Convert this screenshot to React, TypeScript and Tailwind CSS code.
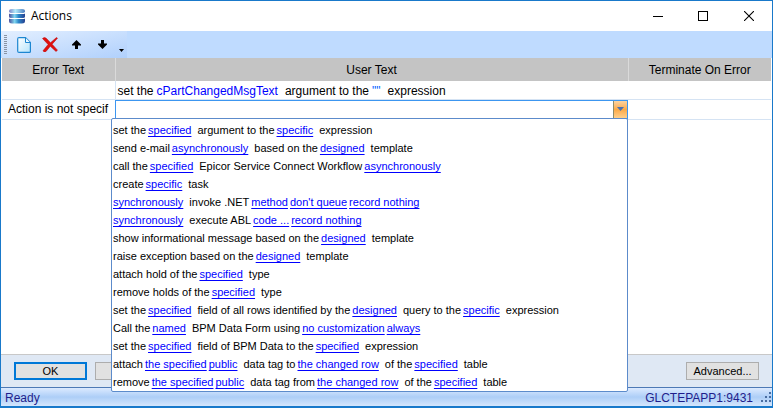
import type { ReactNode } from "react";

// Phrases in [brackets] are the editable parts of an action.
const ACTIONS = [
  "set the [specified] argument to the [specific] expression",
  "send e-mail [asynchronously] based on the [designed] template",
  "call the [specified] Epicor Service Connect Workflow [asynchronously]",
  "create [specific] task",
  "[synchronously] invoke .NET [method] [don't queue] [record nothing]",
  "[synchronously] execute ABL [code ...] [record nothing]",
  "show informational message based on the [designed] template",
  "raise exception based on the [designed] template",
  "attach hold of the [specified] type",
  "remove holds of the [specified] type",
  "set the [specified] field of all rows identified by the [designed] query to the [specific] expression",
  "Call the [named] BPM Data Form using [no customization] [always]",
  "set the [specified] field of BPM Data to the [specified] expression",
  "attach [the specified] [public] data tag to [the changed row] of the [specified] table",
  "remove [the specified] [public] data tag from [the changed row] of the [specified] table",
];

function ActionPhrase({ text }: { text: string }) {
  const parts = text
    .split(/(\[[^\]]+\])/)
    .map((part) => part.trim())
    .filter(Boolean);

  return (
    <>
      {parts.map((part, i) => {
        if (part.startsWith("[")) {
          return (
            <a key={i} href="#" className="mr-0.5 text-[#0000ff] underline decoration-1 underline-offset-2 [text-decoration-skip-ink:none]">
              {part.slice(1, -1)}
            </a>
          );
        }
        return (
          <span key={i} className={i === 0 ? "mr-0.5" : "mr-0.5 ml-1"}>
            {part}
          </span>
        );
      })}
    </>
  );
}

function AppIcon() {
  return (
    <svg width="16" height="15" viewBox="0 0 16 15" aria-hidden="true">
      <defs>
        <linearGradient id="disk" x1="0" x2="1">
          <stop offset="0" stopColor="#4a4f9c" />
          <stop offset="0.35" stopColor="#7fd6f0" />
          <stop offset="0.6" stopColor="#2b86c8" />
          <stop offset="1" stopColor="#27408f" />
        </linearGradient>
        <linearGradient id="diskTop" x1="0" x2="1">
          <stop offset="0" stopColor="#7d86c8" />
          <stop offset="0.4" stopColor="#b4ecfa" />
          <stop offset="1" stopColor="#4a7cc0" />
        </linearGradient>
      </defs>
      <path d="M3 0h10q3 0 3 2.200q0 1.800-2 1.800h-12q-2 0-2-1.800q0-2.200 3-2.200z" fill="url(#diskTop)" />
      <path d="M0 4.500q1 0.500 2 0.500h12q1 0 2-0.500v3q0 1.500-2 1.500h-12q-2 0-2-1.500z" fill="url(#disk)" />
      <path d="M0 9.500q1 0.500 2 0.500h12q1 0 2-0.500v2.500q0 2.500-3 2.500h-10q-3 0-3-2.500z" fill="url(#disk)" />
    </svg>
  );
}

function NewIcon() {
  return (
    <svg width="14" height="16" viewBox="0 0 14 16" aria-hidden="true">
      <defs>
        <linearGradient id="page" x1="0" y1="0" x2="1" y2="1">
          <stop offset="0" stopColor="#ffffff" />
          <stop offset="1" stopColor="#b5e4fb" />
        </linearGradient>
      </defs>
      <path d="M2 0.600h6.500l4.900 4.900v8.900q0 1-1 1h-10.400q-1.300 0-1.300-1.300v-12.200q0-1.300 1.300-1.300z" fill="url(#page)" stroke="#1c86d1" strokeWidth="1.200" />
      <path d="M8.500 0.800v4.700h4.700" fill="#e8f7ff" stroke="#1c86d1" />
    </svg>
  );
}

function DeleteIcon() {
  return (
    <svg width="16" height="15" viewBox="0 0 16 15" aria-hidden="true">
      <path d="M0.500 1.500q2-2 4 0l4 4.200l6-5.200l1 0.700l-5.400 6l5.400 6l-1.500 1.300l-5.700-5.300l-4.300 5.300q-2 1.200-3-0.800l5.100-6.200z" fill="#e01010" stroke="#b80808" strokeWidth="0.500" />
    </svg>
  );
}

function ToolButton({ label, children }: { label: string; children: ReactNode }) {
  return (
    <button aria-label={label} className="flex h-6 w-[26px] items-center justify-center">
      {children}
    </button>
  );
}

function TitleBar() {
  return (
    <header className="flex h-[30px] items-center bg-white pl-2">
      <AppIcon />
      <h1 className="ml-1.5 flex-1 font-['Open_Sans',sans-serif] text-[12px] leading-4">Actions</h1>
      <button aria-label="Minimize" className="flex h-full w-[45px] items-center justify-center">
        <svg width="10" height="10" viewBox="0 0 10 10"><path d="M0 5.500h10" stroke="#000" /></svg>
      </button>
      <button aria-label="Maximize" className="flex h-full w-[45px] items-center justify-center">
        <svg width="10" height="10" viewBox="0 0 10 10"><rect x="0.500" y="0.500" width="9" height="9" fill="none" stroke="#000" /></svg>
      </button>
      <button aria-label="Close" className="flex h-full w-[47px] items-center justify-center">
        <svg width="10" height="10" viewBox="0 0 10 10"><path d="M0 0l10 10M10 0l-10 10" stroke="#000" strokeWidth="1.100" /></svg>
      </button>
    </header>
  );
}

function Toolbar() {
  return (
    <div className="h-[27px] bg-[#bfdbff]">
      <div className="flex h-full w-[126px] items-center bg-gradient-to-br from-[#e3efff] to-[#b0d0fc] pl-[3px]">
        <svg width="3" height="20" className="mr-1" aria-hidden="true">
          <path d="M1.500 0v20" stroke="#8a93a3" strokeWidth="3" strokeDasharray="1 1" />
        </svg>
        <ToolButton label="New"><NewIcon /></ToolButton>
        <ToolButton label="Delete"><DeleteIcon /></ToolButton>
        <ToolButton label="Move up">
          <svg width="9" height="9" viewBox="0 0 9 9"><path d="M4.500 0l4.500 4.500v1h-3v3.500h-3v-3.500h-3v-1z" /></svg>
        </ToolButton>
        <ToolButton label="Move down">
          <svg width="9" height="9" viewBox="0 0 9 9"><path d="M4.500 9l4.500-4.500v-1h-3v-3.500h-3v3.500h-3v1z" /></svg>
        </ToolButton>
        <button aria-label="More" className="flex h-full w-3 items-end justify-center pb-1.5">
          <svg width="5" height="3" viewBox="0 0 5 3"><path d="M0 0h5l-2.500 3z" /></svg>
        </button>
      </div>
    </div>
  );
}

function ActionPicker() {
  return (
    <div className="relative">
      <div className="flex h-[19px] border border-[#3c96f0] bg-white">
        <input aria-label="Action" role="combobox" aria-expanded="true" aria-controls="actions" className="min-w-0 flex-1 px-1 outline-none" />
        <button aria-label="Open list" className="flex w-3.5 items-center justify-center border-l border-[#8c8c6c] bg-gradient-to-b from-[#fbd3a0] via-[#fba945] to-[#ffd08a]">
          <svg width="7" height="4" viewBox="0 0 7 4"><path d="M0 0h7l-3.500 4z" fill="#4a70b0" /></svg>
        </button>
      </div>
      <ul id="actions" className="absolute top-[18px] right-0 -left-1 z-10 rounded-xs border border-[#5c8bcb] bg-white pt-0.5 pl-px text-[11px]">
        {ACTIONS.map((action) => (
          <li key={action} className="flex h-[18px] items-center whitespace-nowrap">
            <ActionPhrase text={action} />
          </li>
        ))}
      </ul>
    </div>
  );
}

function ActionsTable() {
  return (
    <table className="w-full table-fixed border-collapse">
      <thead>
        <tr className="h-[23px] bg-[#c4c4c4]">
          <th className="w-[113px] border-r border-[#dadada] p-0 pt-px font-normal">Error Text</th>
          <th className="border-r border-[#dadada] p-0 pt-px font-normal">User Text</th>
          <th className="w-[143px] p-0 pt-px font-normal">Terminate On Error</th>
        </tr>
      </thead>
      <tbody>
        <tr className="h-[18px] border-b border-[#d5e3f3]">
          <td className="border-r border-[#d5e3f3]" />
          <td className="p-0 pl-0.5 align-bottom">
            <div className="flex h-4 gap-[3px] whitespace-nowrap">
              <span>set the</span>
              <span className="mr-1 text-[#0000ff]">cPartChangedMsgText</span>
              <span>argument to the</span>
              <span className="mr-1 text-[#0060ff]">""</span>
              <span>expression</span>
            </div>
          </td>
          <td />
        </tr>
        <tr className="h-[19px] border-b border-[#d5e3f3]">
          <td className="p-0 pl-1.5 whitespace-nowrap">Action is not specif</td>
          <td className="p-0"><ActionPicker /></td>
          <td />
        </tr>
      </tbody>
    </table>
  );
}

export default function App() {
  return (
    <div className="flex min-h-screen flex-col border border-b-2 border-[#1979ca] bg-[#dfe8f4] font-['Liberation_Sans',Arial,sans-serif] text-[12px] leading-4 text-black">
      <TitleBar />
      <Toolbar />
      <main className="flex-1 border-b border-[#c8c8c8] bg-white px-px">
        <ActionsTable />
      </main>
      <div className="flex h-8 items-center px-[13px] text-[11px]">
        <button className="h-[18px] w-[73px] border-2 border-[#0078d7] bg-[#e1e1e1] leading-3">OK</button>
        <button aria-label="Cancel" className="ml-2 h-[18px] w-[73px] border border-[#adadad] bg-[#e1e1e1]" />
        <button className="ml-auto h-[18px] w-[73px] border border-[#adadad] bg-[#e1e1e1] leading-3">Advanced...</button>
      </div>
      <footer className="flex h-[19px] items-center border-t border-[#4d79b5] bg-gradient-to-b from-[#dceaff] via-[#adcef7] to-[#d5e6fc] pt-px pl-1 text-[#1e1e8c]">
        <span>Ready</span>
        <span className="ml-auto">GLCTEPAPP1:9431</span>
        <svg width="11" height="11" viewBox="0 0 11 11" className="ml-2" aria-hidden="true">
          <path d="M8 0h2v2h-2zM8 4h2v2h-2zM4 4h2v2h-2zM8 8h2v2h-2zM4 8h2v2h-2zM0 8h2v2h-2z" fill="#4a6da0" />
        </svg>
      </footer>
    </div>
  );
}
